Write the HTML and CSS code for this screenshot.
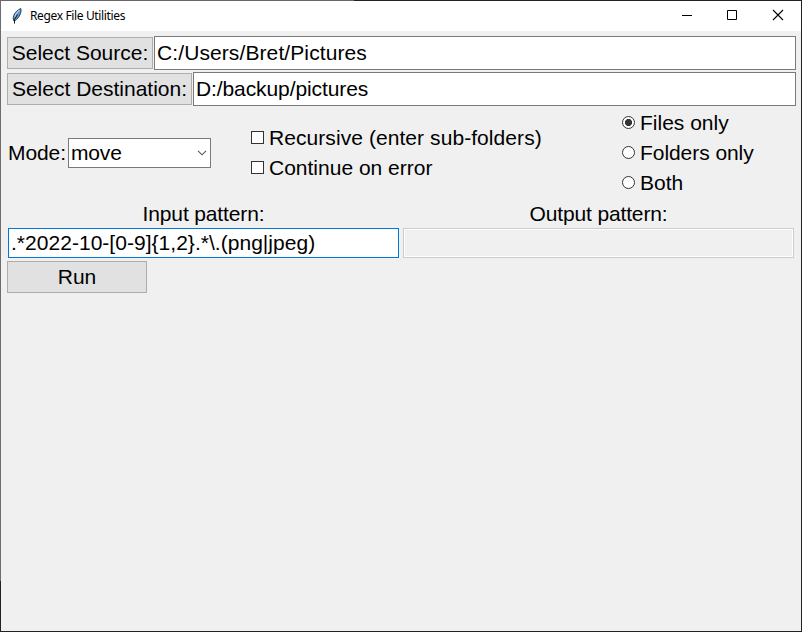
FILE: index.html
```
<!DOCTYPE html>
<html lang="en">
<head>
<meta charset="utf-8">
<title>Regex File Utilities</title>
<link rel="stylesheet" href="styles.css">
</head>
<body>
<div class="window">
  <header class="titlebar">
    <svg class="feather" width="12" height="18" viewBox="0 0 12 18">
      <path d="M2.5 13.500C1.300 9.500 4 4 9.800 1.500C10.800 5 8.500 11 4 13.500Z" fill="#5b94d6" stroke="#26323f" stroke-width=".9"/>
      <path d="M4 10C4.400 7.500 6 5 8.500 3" fill="none" stroke="#a9cdf2" stroke-width="1.200"/>
      <path d="M3.500 16.500V12.500L6.500 7.500" fill="none" stroke="#111" stroke-width="1"/>
    </svg>
    <h1 class="title">Regex File Utilities</h1>
    <div class="controls">
      <svg width="46" height="30" viewBox="0 0 46 30"><path d="M19 14.500H29" stroke="#000"/></svg>
      <svg width="46" height="30" viewBox="0 0 46 30"><path d="M18.500 9.500H27.500V18.500H18.500Z" fill="none" stroke="#000"/></svg>
      <svg width="46" height="30" viewBox="0 0 46 30"><path d="M18 9L28 19M28 9L18 19" stroke="#000" stroke-width="1.100"/></svg>
    </div>
  </header>
  <main class="content">
    <div class="path-row">
      <button class="button source">Select Source:</button>
      <div class="entry"><span class="t-source">C:/Users/Bret/Pictures</span></div>
    </div>
    <div class="path-row">
      <button class="button destination">Select Destination:</button>
      <div class="entry"><span class="t-dest">D:/backup/pictures</span></div>
    </div>
    <div class="options">
      <div class="mode">
        <span class="mode-label">Mode:</span>
        <div class="combo"><span class="t-move">move</span>
          <svg width="10" height="6" viewBox="0 0 10 6"><path d="M1 .8L5 4.800L9 .8" fill="none" stroke="#555" stroke-width="1.100"/></svg>
        </div>
      </div>
      <div class="checks">
        <div class="choice"><i class="box"></i><span class="t-rec">Recursive (enter sub-folders)</span></div>
        <div class="choice"><i class="box"></i><span>Continue on error</span></div>
      </div>
      <div class="radios">
        <div class="choice"><i class="dot on"></i><span>Files only</span></div>
        <div class="choice"><i class="dot"></i><span class="t-folders">Folders only</span></div>
        <div class="choice"><i class="dot"></i><span>Both</span></div>
      </div>
    </div>
    <div class="patterns">
      <div class="pattern">
        <div class="caption">Input pattern:</div>
        <div class="field focused"><span class="t-regex">.*2022-10-[0-9]{1,2}.*\.(png|jpeg)</span></div>
      </div>
      <div class="pattern">
        <div class="caption">Output pattern:</div>
        <div class="field disabled"></div>
      </div>
    </div>
    <button class="button run">Run</button>
  </main>
</div>
</body>
</html>
```
FILE: styles.css
```
* { box-sizing: border-box; }
body { margin: 0; font: 21px/30px "Liberation Sans", Arial, sans-serif; color: #000; }
.window {
  width: 802px; height: 632px;
  padding: 1px 1px 1px 1px;
  background:
    linear-gradient(#f0f0f0, #f0f0f0) 1px 1px / 800px 630px no-repeat,
    linear-gradient(#6b6668, #6b6668) 0 0 / 354px 1px no-repeat,
    linear-gradient(#6d6d6d, #6d6d6d) 0 0 / 1px 581px no-repeat,
    #222;
}
.titlebar { height: 30px; background: #fff; display: flex; align-items: center; padding-left: 10px; }
.feather { margin-right: 7px; }
.title { margin: 0; font: 400 12px/30px "Noto Sans", sans-serif; letter-spacing: -0.36px; white-space: nowrap; }
.controls { display: flex; margin-left: auto; }
.content { padding: 5px 5px 0 6px; }
.path-row { display: flex; align-items: center; gap: 1px; height: 34px; margin-bottom: 2px; }
.button {
  height: 32px; padding: 0; border: 1px solid #adadad; background: #e1e1e1;
  font: inherit; color: inherit; line-height: 30px; white-space: nowrap; display: block;
}
.source { width: 146px; }
.destination { width: 185px; }
.entry { flex: 1; height: 34px; border: 1px solid #7a7a7a; background: #fff; padding-left: 2px; line-height: 32px; white-space: nowrap; }
.options { display: flex; align-items: center; height: 90px; }
.mode { display: flex; align-items: center; padding-left: 1px; width: 244px; }
.mode-label { width: 60px; white-space: nowrap; letter-spacing: -0.1px; }
.combo { width: 143px; height: 30px; border: 1px solid #7a7a7a; background: #fff; padding: 0 3px 0 2px; display: flex; align-items: center; justify-content: space-between; line-height: 28px; }
.checks { width: 371px; }
.choice { display: flex; align-items: center; height: 30px; white-space: nowrap; }
.box, .dot { width: 13px; height: 13px; border: 1px solid #333; background: #fff; margin: 0 5px 2px 0; flex: none; }
.dot { border-radius: 50%; }
.on { background: radial-gradient(circle, #333 3.2px, #fff 3.9px); }
.t-source { letter-spacing: 0.1px; }
.t-dest { letter-spacing: -0.1px; }
.t-move { letter-spacing: -0.15px; }
.t-rec { letter-spacing: 0.07px; }
.t-folders { letter-spacing: -0.06px; }
.t-regex { letter-spacing: 0.03px; }
.patterns { display: flex; gap: 4px; padding-left: 1px; }
.pattern { width: 391px; }
.caption { height: 30px; text-align: center; line-height: 32px; letter-spacing: -0.14px; }
.field { height: 30px; border: 1px solid #0078d7; background: #fff; padding-left: 2px; line-height: 28px; white-space: nowrap; }
.disabled { border-color: #ccc; background: #f0f0f0; box-shadow: inset 0 0 0 1px #fff; }
.run { width: 140px; margin-top: 3px; }
```
